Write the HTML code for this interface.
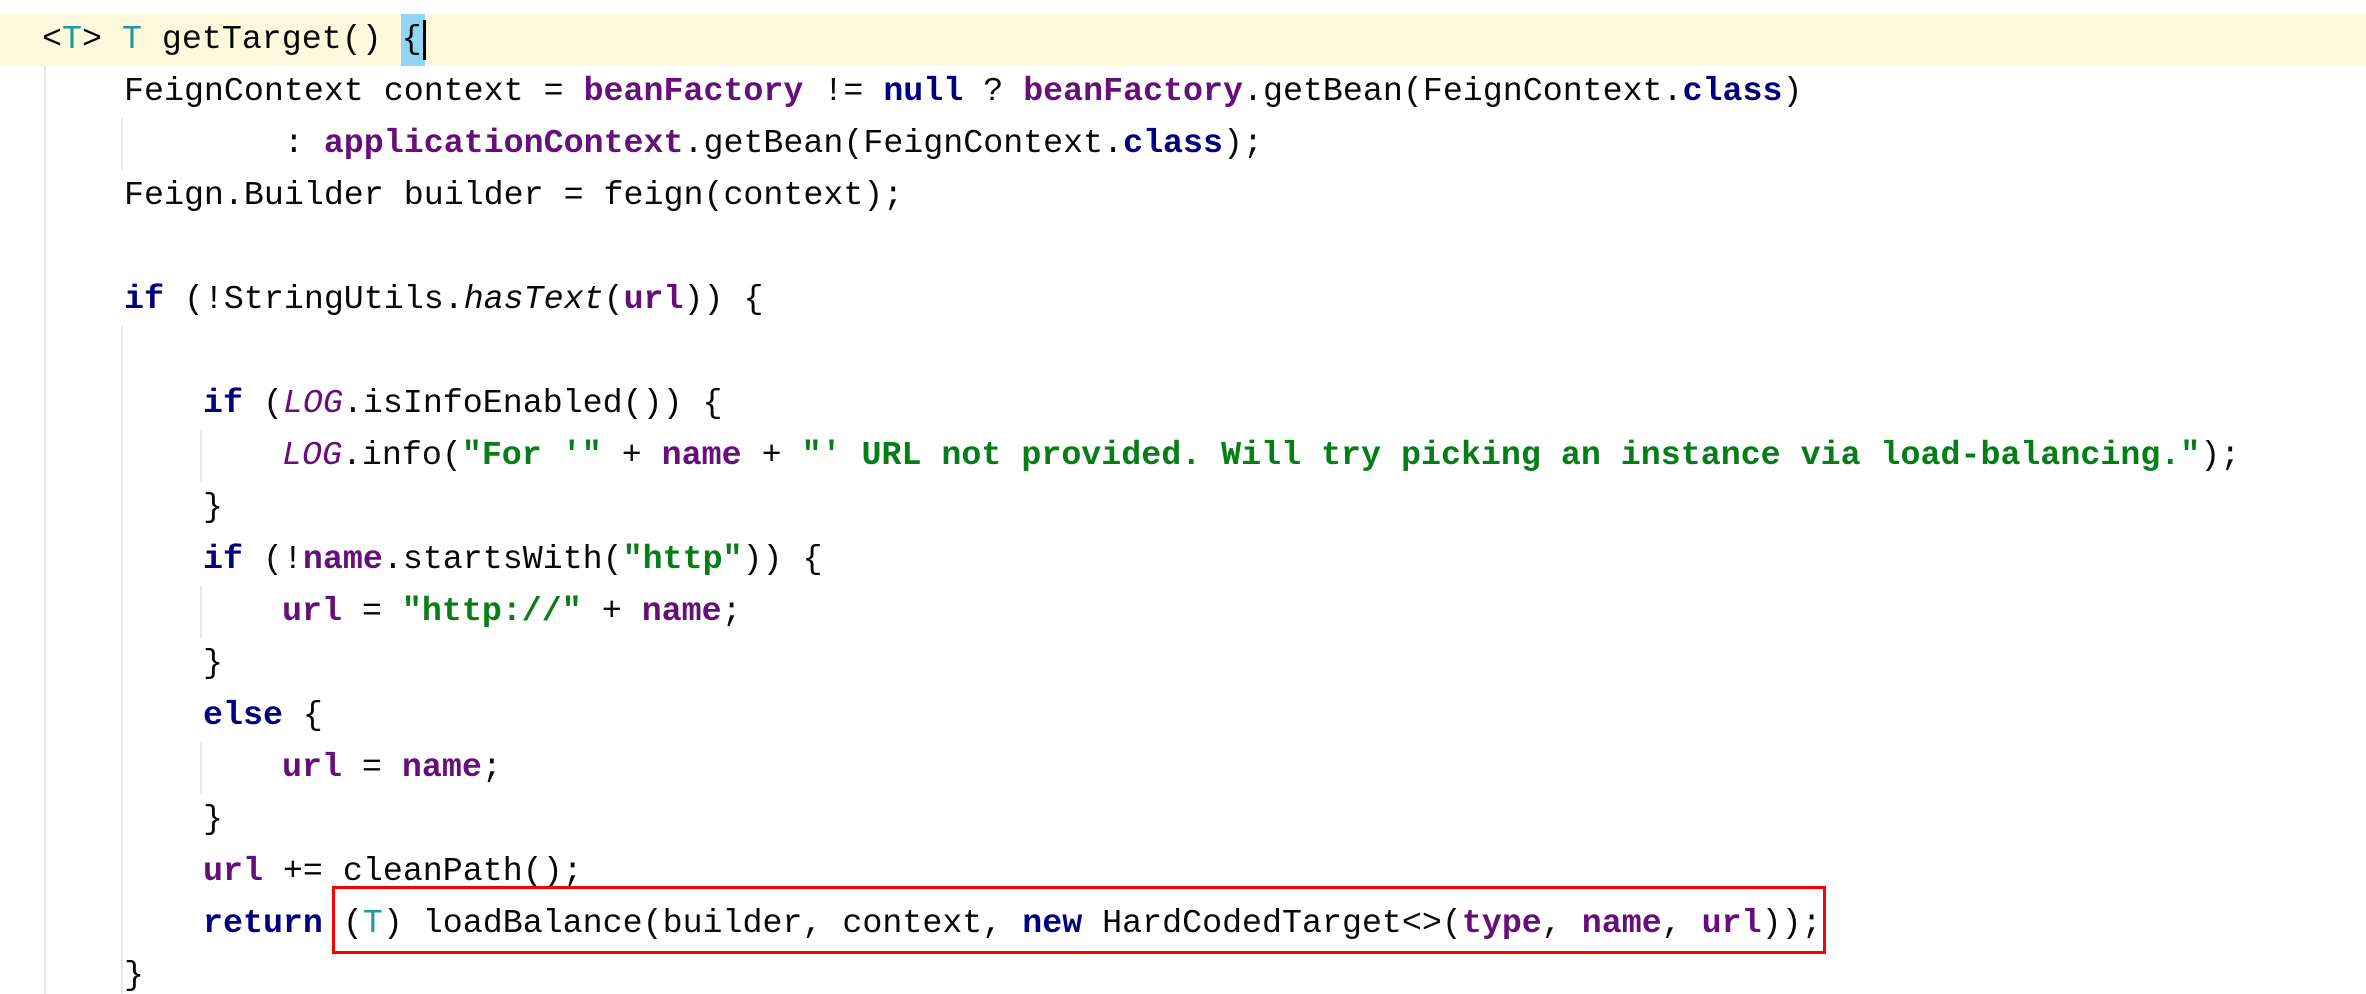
<!DOCTYPE html>
<html><head><meta charset="utf-8"><style>
html,body{margin:0;padding:0;background:#fff;width:2366px;height:994px;overflow:hidden;position:relative}
.l{position:absolute;left:0;height:52px;line-height:50px;font-family:"Liberation Mono",monospace;font-size:33.3px;color:#080808;white-space:pre}
.k{color:#000080;font-weight:bold}
.f{color:#660e7a;font-weight:bold}
.s{color:#067d17;font-weight:bold}
.t{color:#20999d}
.i{font-style:italic}
.li{color:#660e7a;font-style:italic}
.g{position:absolute;width:2px;background:#e8e8e8}
</style></head><body>
<div style="position:absolute;left:0;top:14px;width:2366px;height:52px;background:#fef8dc"></div>
<div style="position:absolute;left:401px;top:14px;width:24px;height:52px;background:#93d4f5"></div>
<div style="position:absolute;left:423px;top:20px;width:3px;height:40px;background:#000"></div>
<div class="g" style="left:44px;top:66px;height:928px"></div>
<div class="g" style="left:121px;top:118px;height:52px"></div>
<div class="g" style="left:121px;top:326px;height:668px"></div>
<div class="g" style="left:200px;top:430px;height:52px"></div>
<div class="g" style="left:200px;top:586px;height:52px"></div>
<div class="g" style="left:200px;top:742px;height:52px"></div>
<div class="l" style="top:-40px;left:52px;color:#8c8c8c">*/</div>
<div class="l" style="top:14px;left:42px">&lt;<span class="t">T</span>&gt; <span class="t">T</span> getTarget() {</div>
<div class="l" style="top:66px;left:124px">FeignContext context = <span class="f">beanFactory</span> != <span class="k">null</span> ? <span class="f">beanFactory</span>.getBean(FeignContext.<span class="k">class</span>)</div>
<div class="l" style="top:118px;left:124px">        : <span class="f">applicationContext</span>.getBean(FeignContext.<span class="k">class</span>);</div>
<div class="l" style="top:170px;left:124px">Feign.Builder builder = feign(context);</div>
<div class="l" style="top:274px;left:124px"><span class="k">if</span> (!StringUtils.<span class="i">hasText</span>(<span class="f">url</span>)) {</div>
<div class="l" style="top:378px;left:203px"><span class="k">if</span> (<span class="li">LOG</span>.isInfoEnabled()) {</div>
<div class="l" style="top:430px;left:282px"><span class="li">LOG</span>.info(<span class="s">"For '"</span> + <span class="f">name</span> + <span class="s">"' URL not provided. Will try picking an instance via load-balancing."</span>);</div>
<div class="l" style="top:482px;left:203px">}</div>
<div class="l" style="top:534px;left:203px"><span class="k">if</span> (!<span class="f">name</span>.startsWith(<span class="s">"http"</span>)) {</div>
<div class="l" style="top:586px;left:282px"><span class="f">url</span> = <span class="s">"http://"</span> + <span class="f">name</span>;</div>
<div class="l" style="top:638px;left:203px">}</div>
<div class="l" style="top:690px;left:203px"><span class="k">else</span> {</div>
<div class="l" style="top:742px;left:282px"><span class="f">url</span> = <span class="f">name</span>;</div>
<div class="l" style="top:794px;left:203px">}</div>
<div class="l" style="top:846px;left:203px"><span class="f">url</span> += cleanPath();</div>
<div class="l" style="top:898px;left:203px"><span class="k">return</span> (<span class="t">T</span>) loadBalance(builder, context, <span class="k">new</span> HardCodedTarget&lt;&gt;(<span class="f">type</span>, <span class="f">name</span>, <span class="f">url</span>));</div>
<div class="l" style="top:950px;left:124px">}</div>
<div style="position:absolute;left:332px;top:886px;width:1488px;height:62px;border:3px solid #f00"></div>
</body></html>
